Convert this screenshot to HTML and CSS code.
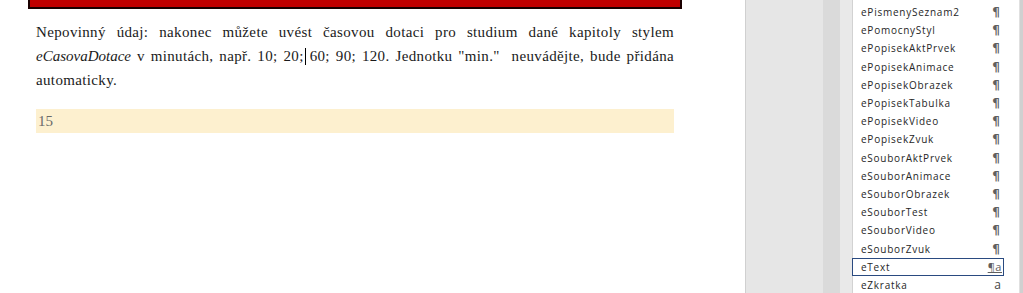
FILE: index.html
```html
<!DOCTYPE html>
<html lang="cs">
<head>
<meta charset="utf-8">
<link rel="stylesheet" href="styles.css">
</head>
<body>
<div class="doc">
  <div class="redbar"></div>
  <div class="para">
    <span class="line just">Nepovinný údaj: nakonec můžete uvést časovou dotaci pro studium dané kapitoly stylem</span>
    <span class="line just"><i>eCasovaDotace</i> v minutách, např. 10; 20;<span class="caret"></span> 60; 90; 120. Jednotku "min."&nbsp; neuvádějte, bude přidána</span>
    <span class="line">automaticky.</span>
  </div>
  <div class="field">15</div>
</div>
<div class="pane">
  <div class="gutter"></div>
  <div class="stripe"></div>
  <div class="stripe2"></div>
  <ul class="styles">
    <li><span>ePismenySeznam2</span><span class="mark">¶</span></li>
    <li><span>ePomocnyStyl</span><span class="mark">¶</span></li>
    <li><span>ePopisekAktPrvek</span><span class="mark">¶</span></li>
    <li><span>ePopisekAnimace</span><span class="mark">¶</span></li>
    <li><span>ePopisekObrazek</span><span class="mark">¶</span></li>
    <li><span>ePopisekTabulka</span><span class="mark">¶</span></li>
    <li><span>ePopisekVideo</span><span class="mark">¶</span></li>
    <li><span>ePopisekZvuk</span><span class="mark">¶</span></li>
    <li><span>eSouborAktPrvek</span><span class="mark">¶</span></li>
    <li><span>eSouborAnimace</span><span class="mark">¶</span></li>
    <li><span>eSouborObrazek</span><span class="mark">¶</span></li>
    <li><span>eSouborTest</span><span class="mark">¶</span></li>
    <li><span>eSouborVideo</span><span class="mark">¶</span></li>
    <li><span>eSouborZvuk</span><span class="mark">¶</span></li>
    <li class="sel"><span>eText</span><span class="mark linked">¶a</span></li>
    <li class="chr"><span>eZkratka</span><span class="mark char">a</span></li>
  </ul>
  <div class="edge"></div>
</div>
</body>
</html>
```

FILE: styles.css
```css
html, body {
  margin: 0;
  padding: 0;
}
body {
  width: 1023px;
  height: 293px;
  overflow: hidden;
  display: flex;
  background: #ffffff;
}
.doc {
  width: 745px;
  flex: none;
  background: #ffffff;
  padding-left: 28px;
  box-sizing: border-box;
}
.redbar {
  width: 654px;
  height: 9px;
  box-sizing: border-box;
  background: #c00000;
  border: 2px solid #1a0000;
  border-top: none;
}
.para {
  width: 638px;
  margin-top: 11px;
  margin-left: 8px;
  font-family: "Liberation Serif", "Times New Roman", serif;
  font-size: 15px;
  letter-spacing: 0.35px;
  line-height: 24px;
  color: #1a1a1a;
}
.line {
  display: block;
  white-space: nowrap;
}
.line.just {
  text-align: justify;
  text-align-last: justify;
  white-space: normal;
}
.para i {
  letter-spacing: 0;
}
.caret {
  display: inline-block;
  width: 1px;
  height: 17px;
  background: #000;
  vertical-align: -4px;
  margin-left: 1px;
  margin-right: -2px;
}
.field {
  width: 638px;
  margin-left: 8px;
  margin-top: 17px;
  height: 24px;
  background: #fdf0cf;
  font-family: "Liberation Serif", "Times New Roman", serif;
  font-size: 15px;
  line-height: 24px;
  color: #6a6a6a;
  padding-left: 2px;
  box-sizing: border-box;
}
.pane {
  flex: 1;
  display: flex;
  border-left: 1px solid #d0d0d0;
  background: #e6e6e6;
}
.gutter {
  width: 77px;
  flex: none;
  background: #e6e6e6;
}
.stripe {
  width: 17px;
  flex: none;
  background: #dadada;
}
.stripe2 {
  width: 12px;
  flex: none;
  background: #e9e9e9;
  border-right: 1px solid #d2d2d2;
}
.styles {
  list-style: none;
  margin: 0;
  padding: 3px 0 0 0;
  width: 166px;
  flex: none;
  background: #ffffff;
  font-family: "Open Sans", "Noto Sans", sans-serif;
  font-size: 10px;
  letter-spacing: 0.75px;
  color: #262626;
}
.styles li {
  height: 18.2px;
  display: flex;
  align-items: center;
  justify-content: space-between;
  padding: 0 4px 0 8px;
  box-sizing: border-box;
  width: 151px;
}
.styles li.sel {
  border: 1px solid #2a4a80;
  margin-left: -1px;
  width: 152px;
  padding-left: 8px;
  padding-right: 1px;
}
.styles li.chr {
  padding-right: 3px;
}
.mark {
  color: #606060;
  font-family: "DejaVu Sans", sans-serif;
  font-size: 12px;
  font-weight: bold;
  letter-spacing: 0;
}
.mark.linked {
  font-family: "Open Sans", sans-serif;
  font-weight: normal;
  font-size: 11px;
  text-decoration: underline;
  letter-spacing: 0.5px;
}
.mark.char {
  font-family: "Open Sans", sans-serif;
  font-weight: normal;
  font-size: 12px;
  color: #444;
}
.edge {
  flex: 1;
  background: #d0d0d0;
  border-left: 1px solid #e0e0e0;
}
```
